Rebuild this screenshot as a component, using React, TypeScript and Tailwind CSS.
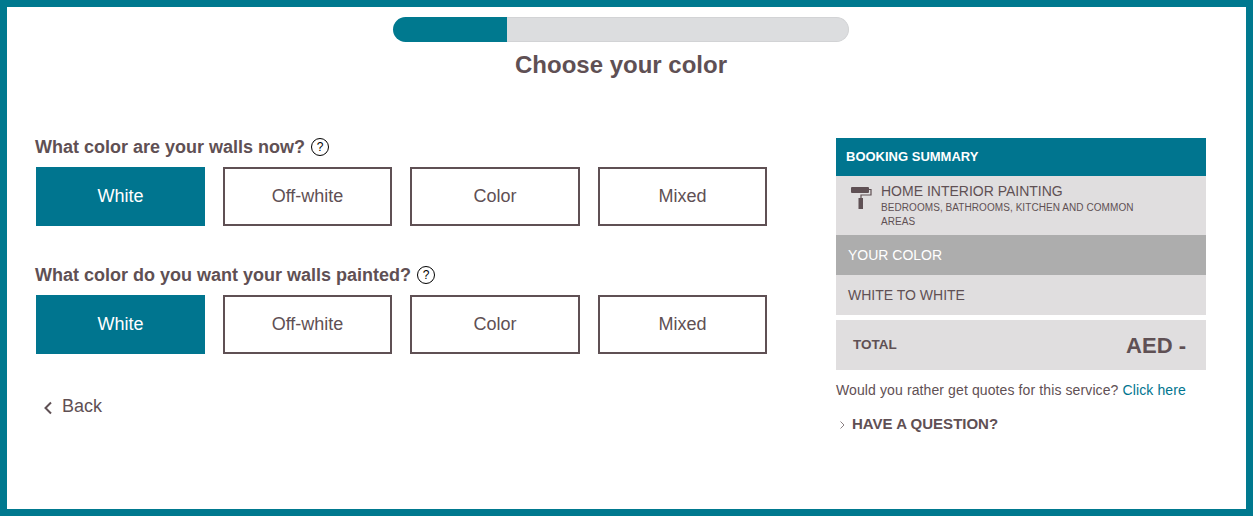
const options = [
  { label: 'White', cls: 'w-[169px] bg-[#00758f] text-white' },
  { label: 'Off-white', cls: 'w-[169px] border-2 border-[#5f5054] text-[#5f5054]' },
  { label: 'Color', cls: 'w-[170px] border-2 border-[#5f5054] text-[#5f5054]' },
  { label: 'Mixed', cls: 'w-[169px] border-2 border-[#5f5054] text-[#5f5054]' },
];

function HelpIcon() {
  return (
    <span className="w-[18px] h-[18px] rounded-full border border-black text-black text-[12px] leading-[16px] text-center font-normal shrink-0">
      ?
    </span>
  );
}

function ColorQuestion({ title }: { title: string }) {
  return (
    <section>
      <h2 className="flex items-center gap-[6px] h-[18px] text-[18px] leading-[18px] font-bold text-[#5f5054] -ml-px">
        {title} <HelpIcon />
      </h2>
      <div className="mt-[11px] flex gap-[18px]">
        {options.map((o) => (
          <button key={o.label} className={`h-[59px] text-[18px] ${o.cls}`}>
            {o.label}
          </button>
        ))}
      </div>
    </section>
  );
}

function RollerIcon() {
  return (
    <svg width="21" height="22" viewBox="0 0 21 22" className="shrink-0 mt-[4px] text-[#5f5054]">
      <rect x="0" y="0" width="18" height="6" rx="1" fill="currentColor" />
      <path d="M18 2.500h2v5.500h-10v3" fill="none" stroke="currentColor" strokeWidth="1.200" />
      <rect x="7.500" y="11" width="4.500" height="11" fill="currentColor" />
    </svg>
  );
}

export default function App() {
  return (
    <div
      className="w-[1253px] h-[516px] border-[7px] border-[#00798f] bg-white overflow-hidden"
      style={{ fontFamily: '"Liberation Sans", Arial, sans-serif' }}
    >
      <div className="ml-[386px] mt-[10px] w-[456px]">
        <div className="flex h-[25px]">
          <div className="w-[114px] rounded-l-full bg-[#00798f]" />
          <div className="flex-1 rounded-r-full bg-[#dcdddf] border border-l-0 border-[#d2d3d5]" />
        </div>
        <h1 className="mt-[9px] text-center text-[24px] leading-[28px] font-bold text-[#5f5054]">Choose your color</h1>
      </div>

      <div className="flex mt-[59px] pl-[29px]">
        <main className="w-[800px]">
          <ColorQuestion title="What color are your walls now?" />
          <div className="mt-[40px]">
            <ColorQuestion title="What color do you want your walls painted?" />
          </div>
          <a className="mt-[41px] ml-[7px] flex items-center gap-[9px] text-[18px] leading-[22px] text-[#5f5054]">
            <svg width="10" height="14" viewBox="0 0 10 14" className="mt-[3px]">
              <path d="M8 1.500 2.500 7 8 12.500" fill="none" stroke="currentColor" strokeWidth="2" />
            </svg>
            Back
          </a>
        </main>

        <aside className="w-[370px] text-[#5f5054]">
          <div className="h-[38px] pl-[10px] flex items-center bg-[#00758f] text-white text-[13px] font-bold">BOOKING SUMMARY</div>
          <div className="h-[59px] bg-[#e0dedf] flex pl-[15px] pt-[7px] gap-[9px]">
            <RollerIcon />
            <div className="w-[270px]">
              <div className="text-[14px] leading-[16px]">HOME INTERIOR PAINTING</div>
              <div className="mt-[2px] text-[10px] leading-[14px] tracking-[0.07px]">BEDROOMS, BATHROOMS, KITCHEN AND COMMON AREAS</div>
            </div>
          </div>
          <div className="h-[40px] pl-[12px] flex items-center bg-[#adadad] text-white text-[14px]">YOUR COLOR</div>
          <div className="h-[40px] pl-[12px] flex items-center bg-[#e0dedf] text-[14px]">WHITE TO WHITE</div>
          <div className="mt-[5px] h-[50px] pl-[17px] pr-[20px] pt-[1px] flex items-center justify-between bg-[#e0dedf] font-bold">
            <span className="text-[13.500px]">TOTAL</span>
            <span className="text-[22px]">AED -</span>
          </div>
          <p className="mt-[12px] text-[14px] leading-[16px] tracking-[0.11px]">
            Would you rather get quotes for this service? <a className="text-[#00758f]">Click here</a>
          </p>
          <div className="mt-[18px] ml-[4px] flex items-center gap-[7px] text-[15px] leading-[16px] font-bold">
            <svg width="5" height="8" viewBox="0 0 5 8" className="mt-px">
              <path d="M.5.500 4 4 .5 7.500" fill="none" stroke="#8a8083" strokeWidth="1" />
            </svg>
            HAVE A QUESTION?
          </div>
        </aside>
      </div>
    </div>
  );
}
